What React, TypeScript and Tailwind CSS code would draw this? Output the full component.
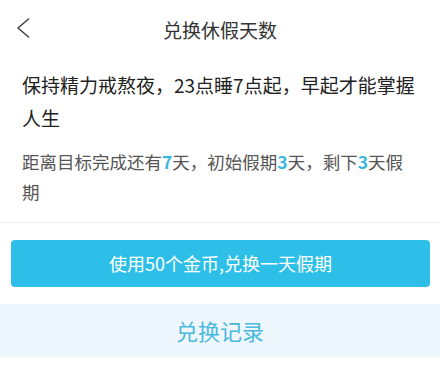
export default function App() {
  const font = { fontFamily: '"Noto Sans CJK SC", "Noto Sans", sans-serif' };
  return (
    <div className="w-[440px] h-[373px] bg-white overflow-hidden" style={font}>
      <header className="relative flex h-[59px] items-center justify-center">
        <button className="absolute left-[15px] top-[17px] flex h-[22px] w-[16px] items-center justify-center">
          <svg width="14" height="20" viewBox="0 0 14 20" fill="none">
            <polyline
              points="12.5,1 2,10 12.5,19"
              stroke="#444"
              strokeWidth="1.6"
              strokeLinecap="round"
              strokeLinejoin="round"
            />
          </svg>
        </button>
        <h1 className="text-[19px] text-[#333] leading-none">兑换休假天数</h1>
      </header>

      <section className="px-[22px] pt-[9px] pb-[15px] border-b border-[#efefef]">
        <p className="text-[19px] leading-[33px] text-[#222]">
          保持精力戒熬夜，23点睡7点起，早起才能掌握人生
        </p>
        <p className="mt-[13px] text-[17.5px] leading-[30px] text-[#555]">
          距离目标完成还有<span className="font-bold text-[#3db8dc]">7</span>天，初始假期
          <span className="font-bold text-[#3db8dc]">3</span>天，剩下
          <span className="font-bold text-[#3db8dc]">3</span>天假期
        </p>
      </section>

      <div className="px-[11px] pr-[10px] pt-[17px]">
        <button className="flex h-[47px] w-full items-center justify-center rounded-[4px] bg-[#2ebfe8] text-[18px] text-white">
          使用50个金币,兑换一天假期
        </button>
      </div>

      <div className="mt-[17px] flex h-[53px] items-center justify-center bg-[#edf7fd] text-[22px] text-[#4bb8dd]">
        兑换记录
      </div>
    </div>
  );
}
